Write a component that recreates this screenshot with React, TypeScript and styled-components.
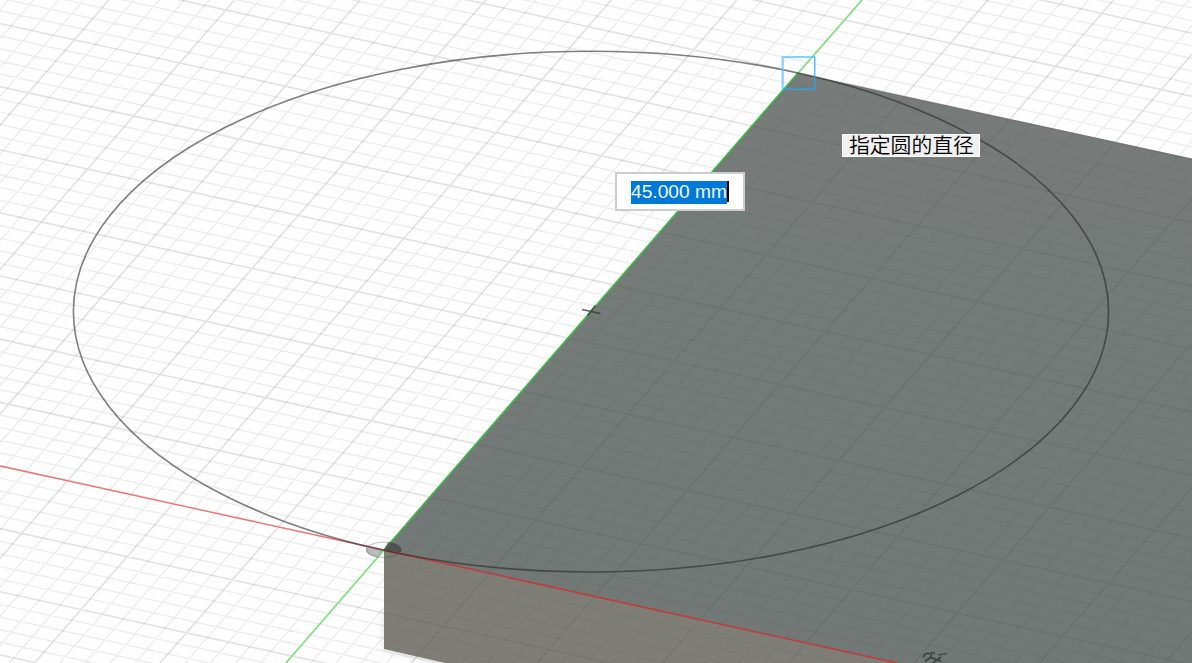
import React from 'react';
import styled, { createGlobalStyle } from 'styled-components';

const GlobalStyle = createGlobalStyle`
  body { margin: 0; background: #fff; overflow: hidden; }
`;

const Viewport = styled.main`
  position: relative;
  width: 1192px;
  height: 663px;
  overflow: hidden;
  background: #fefefe;
`;

const Scene = styled.svg`
  display: block;
  width: 100%;
  height: 100%;
`;

const DimensionField = styled.div`
  position: absolute;
  left: 615px;
  top: 172px;
  box-sizing: border-box;
  width: 130px;
  height: 39px;
  padding: 7px 0 0 14px;
  display: flex;
  align-items: flex-start;
  background: #fff;
  border: 2px solid #cdcdcd;
`;

const SelectedValue = styled.span`
  height: 23px;
  line-height: 22px;
  background: #0078d7;
  color: #f4f9fd;
  font-family: 'Liberation Sans', Arial, sans-serif;
  font-size: 19.2px;
  white-space: nowrap;
`;

const Caret = styled.span`
  width: 2px;
  height: 21px;
  background: #000;
`;

const Hint = styled.div`
  position: absolute;
  left: 842px;
  top: 134px;
  box-sizing: border-box;
  width: 138px;
  height: 23px;
  padding-left: 6px;
  background: #f0f0f0;
  border: 1px solid #fff;
  color: #000;
  font-family: 'Noto Sans CJK SC', sans-serif;
  font-size: 20.8px;
  font-weight: 350;
  line-height: 19px;
  white-space: nowrap;
`;

const ORIGIN = [384, 550];
const X_STEP = [105.4, 23.2];
const Y_STEP = [46.1, -53];
const DIVISIONS = 5;

const project = (u: number, v: number) =>
  `${(ORIGIN[0] + u * X_STEP[0] + v * Y_STEP[0]).toFixed(2)} ${(
    ORIGIN[1] + u * X_STEP[1] + v * Y_STEP[1]
  ).toFixed(2)}`;

const buildGrid = () => {
  let minor = '';
  let major = '';
  for (let n = -100; n <= 100; n++) {
    const t = n / DIVISIONS;
    const d = `M${project(t, -20)}L${project(t, 20)}M${project(-20, t)}L${project(20, t)}`;
    if (n % DIVISIONS === 0) major += d;
    else minor += d;
  }
  return { minor, major };
};

const grid = buildGrid();

const Grid = ({ minor, major, color = '#000' }: { minor: number; major: number; color?: string }) => (
  <g fill="none" stroke={color}>
    <path d={grid.minor} strokeOpacity={minor} strokeWidth="1.4" />
    <path d={grid.major} strokeOpacity={major} strokeWidth="1.6" />
  </g>
);

const TOP_FACE = '384,550 798,73 1192,158.5 1192,663 897,663';
const FRONT_FACE = '384,550 897,663 445,663 384,649';

export default function App() {
  return (
    <>
      <GlobalStyle />
      <Viewport>
        <Scene viewBox="0 0 1192 663">
          <defs>
            <clipPath id="body">
              <polygon points={TOP_FACE} />
              <polygon points={FRONT_FACE} />
            </clipPath>
            <linearGradient id="top" x1="0" y1="0" x2="0" y2="1">
              <stop offset="0" stopColor="#777c7a" />
              <stop offset="1" stopColor="#717875" />
            </linearGradient>
            <filter id="soft" x="-20%" y="-20%" width="140%" height="140%">
              <feGaussianBlur stdDeviation="4" />
            </filter>
          </defs>

          <Grid minor={0.07} major={0.115} />
          <polygon points="384,612 384,650 445,664 520,667 520,612" fill="#000" opacity="0.12" filter="url(#soft)" />

          <path d="M0 466L384 550" stroke="#f47070" strokeWidth="1.3" />
          <path d="M286 663L384 550" stroke="#7fe27f" strokeWidth="1.6" />
          <path d="M798 73L862 0" stroke="#7fe27f" strokeWidth="1.6" />

          <polygon points={TOP_FACE} fill="url(#top)" />
          <polygon points={FRONT_FACE} fill="#7e7e77" />
          <g clipPath="url(#body)">
            <Grid minor={0.04} major={0.07} color="#102020" />
          </g>

          <path d="M384 550L798 73" stroke="#45b64b" strokeWidth="1.8" />
          <path d="M384 550L897 663" stroke="#c63a3a" strokeWidth="1.6" />
          <ellipse cx="591" cy="311.6" rx="517.6" ry="260.4" fill="none" stroke="#202626" strokeOpacity="0.58" strokeWidth="1.6" />

          <path d="M366.500 547.500A17 8 0 0 0 377 557L384 550Z" fill="#555" fillOpacity="0.4" />
          <path d="M388 542A17 8 0 0 1 400.500 552.500L384 550Z" fill="#29302e" fillOpacity="0.5" />
          <ellipse cx="383.500" cy="549.700" rx="17" ry="7.600" fill="none" stroke="#444" strokeOpacity="0.28" strokeWidth="1.3" />

          <path d="M582 309.500L600.500 313.500M587.500 315.500L595.500 305.500" stroke="#303b37" strokeOpacity="0.8" strokeWidth="1.6" />

          <path d="M815 57H782.700V89.300" fill="none" stroke="#5cc3fa" strokeOpacity="0.75" strokeWidth="2.2" />
          <path d="M814.700 56.500V89.300H782.500" fill="none" stroke="#2aa9ee" strokeOpacity="0.75" strokeWidth="1.6" />

          <path d="M923.500 657.500Q924 652.500 929.500 653.500Q934 655 929 658.500L925 661.500M930 657L941 661.500M941 657L933 663M931 652L935 653.500" fill="none" stroke="#262c2b" strokeOpacity="0.7" strokeWidth="1.7" />
          <path d="M938 655L947 653.500" fill="none" stroke="#262c2b" strokeOpacity="0.55" strokeWidth="1.4" />
        </Scene>

        <DimensionField>
          <SelectedValue>45.000 mm</SelectedValue>
          <Caret />
        </DimensionField>
        <Hint>指定圆的直径</Hint>
      </Viewport>
    </>
  );
}
